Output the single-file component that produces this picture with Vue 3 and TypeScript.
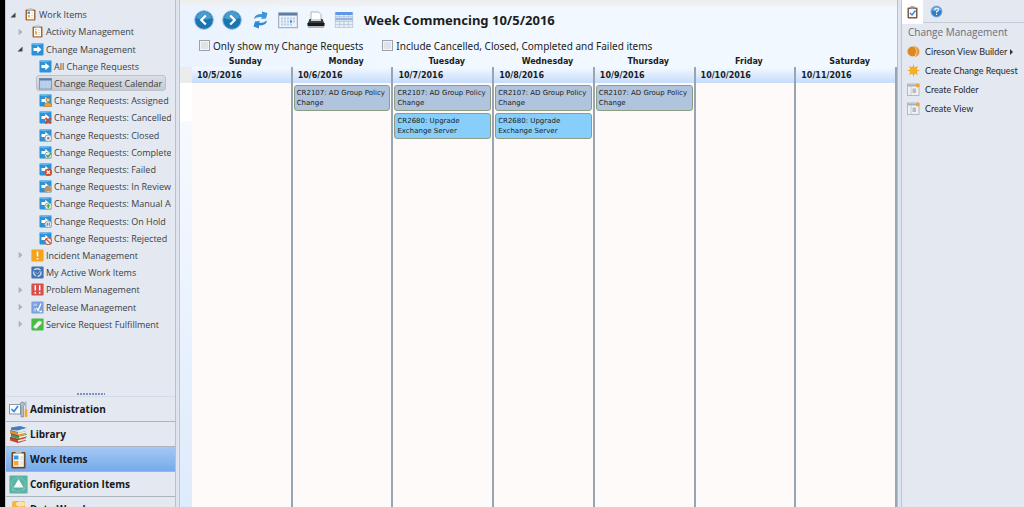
<script setup lang="ts">
import { ref } from 'vue'

interface TreeItem { label: string; level: number; icon: string; arrow?: 'open' | 'closed'; badge?: string; selected?: boolean }

const tree: TreeItem[] = [
  { label: 'Work Items', level: 0, icon: 'board-blue', arrow: 'open' },
  { label: 'Activity Management', level: 1, icon: 'board', arrow: 'closed' },
  { label: 'Change Management', level: 1, icon: 'change', arrow: 'open' },
  { label: 'All Change Requests', level: 2, icon: 'change' },
  { label: 'Change Request Calendar', level: 2, icon: 'calendar', selected: true },
  { label: 'Change Requests: Assigned', level: 2, icon: 'change', badge: 'user' },
  { label: 'Change Requests: Cancelled', level: 2, icon: 'change', badge: 'cross' },
  { label: 'Change Requests: Closed', level: 2, icon: 'change', badge: 'closed' },
  { label: 'Change Requests: Completed', level: 2, icon: 'change', badge: 'check' },
  { label: 'Change Requests: Failed', level: 2, icon: 'change', badge: 'fail' },
  { label: 'Change Requests: In Review', level: 2, icon: 'change', badge: 'review' },
  { label: 'Change Requests: Manual Activity', level: 2, icon: 'change', badge: 'manual' },
  { label: 'Change Requests: On Hold', level: 2, icon: 'change', badge: 'hold' },
  { label: 'Change Requests: Rejected', level: 2, icon: 'change', badge: 'reject' },
  { label: 'Incident Management', level: 1, icon: 'incident', arrow: 'closed' },
  { label: 'My Active Work Items', level: 1, icon: 'active' },
  { label: 'Problem Management', level: 1, icon: 'problem', arrow: 'closed' },
  { label: 'Release Management', level: 1, icon: 'release', arrow: 'closed' },
  { label: 'Service Request Fulfillment', level: 1, icon: 'service', arrow: 'closed' },
]

const sections = [
  { label: 'Administration', icon: 'admin' },
  { label: 'Library', icon: 'library' },
  { label: 'Work Items', icon: 'work' },
  { label: 'Configuration Items', icon: 'config' },
  { label: 'Data Warehouse', icon: 'data' },
]
const activeSection = ref('Work Items')

const policy = { title: 'CR2107: AD Group Policy Change', kind: 'steel' }
const exchange = { title: 'CR2680: Upgrade Exchange Server', kind: 'sky' }
const days = [
  { name: 'Sunday', date: '10/5/2016', events: [] as typeof policy[] },
  { name: 'Monday', date: '10/6/2016', events: [policy] },
  { name: 'Tuesday', date: '10/7/2016', events: [policy, exchange] },
  { name: 'Wednesday', date: '10/8/2016', events: [policy, exchange] },
  { name: 'Thursday', date: '10/9/2016', events: [policy] },
  { name: 'Friday', date: '10/10/2016', events: [] },
  { name: 'Saturday', date: '10/11/2016', events: [] },
]

const onlyMine = ref(false)
const includeClosed = ref(false)
</script>

<template>
  <div class="console">
    <aside class="sidebar">
      <ul class="tree">
        <li v-for="item in tree" :key="item.label" :class="['node', 'level-' + item.level]">
          <svg class="arrow" viewBox="0 0 8 8" aria-hidden="true">
            <path v-if="item.arrow === 'open'" d="M6.5 1.5V6.5H1.5Z" fill="#444" />
            <path v-else-if="item.arrow === 'closed'" d="M3 1.5L6 4L3 6.5Z" fill="#b9bdc5" stroke="#9a9ea8" stroke-width=".6" />
          </svg>
          <a href="#" :class="['node-link', { selected: item.selected }]">
            <svg class="node-icon" viewBox="0 0 13 13" aria-hidden="true">
              <template v-if="item.icon === 'change'">
                <rect x=".5" y=".5" width="12" height="12" rx="1" fill="#2c92d8" />
                <path d="M.5 1.5Q6 3 12.5 1V.5H.5Z" fill="#61b5ea" />
                <path d="M2.5 5H6.3V2.8L10.5 6.5L6.3 10.2V8H2.5Z" fill="#fff" />
              </template>
              <template v-else-if="item.icon === 'board' || item.icon === 'board-blue'">
                <rect x="1.5" y="1.5" width="10" height="11" rx="1" fill="#a06a36" />
                <rect x="3" y="2.8" width="7" height="8.5" fill="#fffdf5" />
                <rect x="4.2" y=".3" width="4.6" height="2.5" rx="1" fill="#bcc1c7" />
                <path v-if="item.icon === 'board-blue'" d="M3.5 3.5H6V6H3.5Z" fill="#39a0e8" />
                <path v-else d="M4 4.5H5.5M4 6.5H5.5M4 8.5H5.5" stroke="#e99b37" />
                <path d="M4 7H6V9.5H4Z" fill="#f1a638" />
                <path d="M7 5H9M7 7.5H9M7 9.5H9" stroke="#d8d8dc" />
              </template>
              <template v-else-if="item.icon === 'calendar'">
                <rect x=".5" y="1.5" width="12" height="10.5" fill="#b8cdea" stroke="#748cad" stroke-width=".8" />
                <rect x=".5" y="1.5" width="12" height="2" fill="#5c7eac" />
                <path d="M1 6H12M1 9H12M4.5 3.5V12M8.5 3.5V12" stroke="#c2d6f0" stroke-width=".4" />
              </template>
              <template v-else-if="item.icon === 'incident'">
                <rect x=".4" y=".4" width="12.2" height="12.2" rx="1" fill="#f5a21c" />
                <path d="M6.5 2.5V7.5M6.5 9V10.5" stroke="#fff" stroke-width="1.6" />
              </template>
              <template v-else-if="item.icon === 'active'">
                <rect x=".4" y=".4" width="12.2" height="12.2" rx="1" fill="#4272b0" />
                <path d="M3 4Q6.5 1.5 9.5 4M10 5.5Q10.5 9.5 6.5 10.5M5 10Q1.5 7.5 3 5.5" fill="none" stroke="#c8dbf0" stroke-width="1.3" />
                <path d="M4.5 6L6.5 8L9.5 4.5" fill="none" stroke="#8eb2dc" />
              </template>
              <template v-else-if="item.icon === 'problem'">
                <rect x=".4" y=".4" width="12.2" height="12.2" rx="1" fill="#d84e48" />
                <path d="M4.3 2.3V7.5M4.3 9V10.7M8.7 2.3V7.5M8.7 9V10.7" stroke="#fff" stroke-width="1.5" />
              </template>
              <template v-else-if="item.icon === 'release'">
                <rect x=".4" y=".4" width="12.2" height="12.2" rx="1" fill="#7c9fdd" />
                <path d="M2.5 2.5H6V5H2.5ZM2.5 7H5V10.5H2.5Z" fill="#adc5ec" />
                <path d="M5.5 7L7 9.5L10 2.5M8.5 10.5H11" fill="none" stroke="#fff" stroke-width="1.3" />
              </template>
              <template v-else>
                <rect x=".4" y=".4" width="12.2" height="12.2" rx="1" fill="#45bd45" />
                <path d="M2.5 8.5L7.5 3L10.5 3.5V5.5L5.5 10.5L3 10Z" fill="#f1f4ef" stroke="#b2cfae" stroke-width=".5" />
              </template>
              <g v-if="item.badge === 'user'"><circle cx="9" cy="6" r="2" fill="#f2c89b" stroke="#b76c21" stroke-width=".7" /><path d="M5.5 12.8V10Q9 7 12.5 10V12.8Z" fill="#eba238" stroke="#b76c21" stroke-width=".5" /></g>
              <path v-else-if="item.badge === 'cross'" d="M6.5 7L12 12.5M12 7L6.5 12.5" stroke="#e14429" stroke-width="2" />
              <g v-else-if="item.badge">
                <circle cx="9.3" cy="9.3" r="3.4" :fill="item.badge === 'fail' ? '#dd4b2d' : '#eceef0'" :stroke="item.badge === 'reject' || item.badge === 'fail' ? '#cf4a2c' : '#9ca4ac'" />
                <path v-if="item.badge === 'fail'" d="M7.7 7.7L10.9 10.9M10.9 7.7L7.7 10.9" stroke="#fff" stroke-width="1.3" />
                <path v-else-if="item.badge === 'check'" d="M7.5 9L9 11L12 7" fill="none" stroke="#36a832" stroke-width="1.4" />
                <path v-else-if="item.badge === 'manual'" d="M9.3 6.7L11.5 9.3H10.1V11.6H8.5V9.3H7.1Z" fill="#3eae36" />
                <path v-else-if="item.badge === 'hold'" d="M8.3 7.8V10.8M10.3 7.8V10.8" stroke="#4c86cd" stroke-width="1.1" />
                <path v-else-if="item.badge === 'reject'" d="M7 7L11.6 11.6" stroke="#dc5638" stroke-width="1.4" />
                <path v-else-if="item.badge === 'review'" d="M5.5 11.5V8L9 5.5L12 8V11.5Z" fill="#bc9166" />
                <rect v-else x="8.2" y="8.2" width="2.2" height="2.2" fill="#777f88" />
              </g>
            </svg>
            <span>{{ item.label }}</span>
          </a>
        </li>
      </ul>
      <div class="grip" aria-hidden="true"></div>
      <nav class="sections">
        <button v-for="s in sections" :key="s.label" type="button" :class="{ current: activeSection === s.label }" @click="activeSection = s.label">
          <svg class="section-icon" viewBox="0 0 19 19" aria-hidden="true">
            <template v-if="s.icon === 'admin'">
              <rect x=".5" y="4.5" width="11" height="9.5" fill="#f6f9fd" stroke="#8b98a8" />
              <path d="M2.5 9L5 11.5L9 6" fill="none" stroke="#2e87d6" stroke-width="1.6" />
              <path d="M11 5Q11 2 13.5 2Q16 2 15.5 5L14.5 6V17H12V6Z" fill="#b4bbc2" stroke="#747d86" stroke-width=".6" />
              <path d="M16.9 1.5V9" stroke="#9aa1a9" /><rect x="15.7" y="9" width="2.6" height="8" rx="1" fill="#f0a52d" />
            </template>
            <template v-else-if="s.icon === 'library'">
              <path d="M2 2.5L11 1L18 3L9 5.5L2 5Z" fill="#3f7fc2" /><path d="M9 5.5L18 3V5L9 7.5Z" fill="#dce5ee" />
              <path d="M1 6L9 8L17 6V9L9 11L1 9Z" fill="#e88d2b" /><path d="M2 9L10 11L18 9V12L10 14L2 12Z" fill="#4f9a4a" />
              <path d="M1 12L9 14L17 12V15.5L9 18L1 15.5Z" fill="#ca4330" /><path d="M9 8.8L17 7M10 12.5L18 10.5M9 16L17 14" stroke="#f2eee6" stroke-width="1.3" />
              <path d="M1 5.5L9 7.5M2 9L10 11M1 12.5L9 14.5" stroke="#5b4032" stroke-width=".7" />
            </template>
            <template v-else-if="s.icon === 'work'">
              <rect x="2.5" y="2" width="14" height="16.5" rx="1" fill="#70482a" /><rect x="4.2" y="3.5" width="10.6" height="13.3" fill="#fffdf7" />
              <rect x="6.5" y=".5" width="6" height="3" rx="1" fill="#b9bfc6" /><rect x="5" y="5.5" width="4.5" height="4" fill="#309ce2" /><rect x="5" y="11" width="4.5" height="4.5" fill="#f4a62d" />
              <path d="M11 7H14M11 9H14M11 12H14M11 14H14" stroke="#c2cbd5" stroke-width=".8" />
            </template>
            <template v-else-if="s.icon === 'config'">
              <rect x=".4" y=".4" width="18.2" height="18.2" rx="1" fill="#5bb3a4" /><circle cx="9.5" cy="9.5" r="7" fill="none" stroke="#7cc3b6" /><path d="M9.5 4L14.5 12.5H4.500Z" fill="#f5fbfa" /><path d="M3 14L5 16M14 15L16 13" stroke="#9bd5ca" />
            </template>
            <template v-else>
              <rect x="3" y="1" width="13" height="17" rx="2" fill="#f2b748" /><ellipse cx="11.5" cy="4" rx="4.5" ry="2.5" fill="#fae4af" /><rect x="4.5" y="8" width="5" height="8" fill="#fff3d5" />
            </template>
          </svg>
          {{ s.label }}
        </button>
      </nav>
    </aside>
    <div class="splitter"></div>

    <main class="calendar">
      <header class="tools">
        <div class="toolbar">
          <button type="button" aria-label="Previous week"><svg viewBox="0 0 20 20"><circle cx="10" cy="10" r="9.3" fill="#1b75b2" stroke="#8bb9d8" /><path d="M2 8A8.2 8.2 0 0 1 18 8Q10 11 2 8Z" fill="#4a9bd0" /><path d="M11.8 5.5L7.3 10L11.8 14.5" fill="none" stroke="#fff" stroke-width="2.2" /></svg></button>
          <button type="button" aria-label="Next week"><svg viewBox="0 0 20 20"><circle cx="10" cy="10" r="9.3" fill="#1b75b2" stroke="#8bb9d8" /><path d="M2 8A8.2 8.2 0 0 1 18 8Q10 11 2 8Z" fill="#4a9bd0" /><path d="M8.2 5.5L12.7 10L8.2 14.5" fill="none" stroke="#fff" stroke-width="2.2" /></svg></button>
          <button type="button" aria-label="Refresh"><svg viewBox="0 0 20 20"><path d="M4 9Q4.500 4 12 4V1.500L17.500 3L16 8.500L11 9L12 7Q7 6.500 4 9Z" fill="#3c96d8" /><path d="M17 10.500Q16.500 15.500 9 15.500V18.500L3.500 16.500L5 11.500L10 11L9 13Q14 13 17 10.500Z" fill="#3389cf" /></svg></button>
          <button type="button" aria-label="Month view"><svg viewBox="0 0 20 20"><rect x=".7" y="2.7" width="18.6" height="15" fill="#edf3fa" stroke="#94a2b5" /><path d="M1 4.3H19" stroke="#5d7ca3" stroke-width="2.5" /><path d="M3 8.5H17M3 11.5H17M3 14.5H14" stroke="#b3cde8" stroke-width="2" stroke-dasharray="2 1" /><rect x="12" y="10.5" width="2" height="2" fill="#3b83cc" /></svg></button>
          <button type="button" aria-label="Print"><svg viewBox="0 0 20 20"><path d="M5 10V2H12.5L15 4.5V10Z" fill="#fff" stroke="#8f969d" stroke-width=".7" /><path d="M3.5 9H5V11H15V9H16.5L18.5 14H1.5Z" fill="#3b3e43" /><rect x="1.5" y="13" width="17" height="3" fill="#18191c" /><path d="M2 17H18" stroke="#b0b3b7" stroke-width="2" /></svg></button>
          <button type="button" aria-label="Week view"><svg viewBox="0 0 20 20"><rect x="1" y="2" width="18" height="15.5" fill="#e6edf5" /><path d="M1 3.5H19" stroke="#5f99e6" stroke-width="3" /><path d="M1 9H19" stroke="#91b6e4" stroke-width="2.5" /><path d="M1 6.5H19M1 11.5H19M1 14.5H19M5.5 5V17.5M10 5V17.5M14.5 5V17.5M1.300 2V17.5M18.700 2V17.500M1 17.5H19" stroke="#b5c3d3" stroke-width=".7" /></svg></button>
          <h1>Week Commencing 10/5/2016</h1>
        </div>
        <div class="filters">
          <label><input v-model="onlyMine" type="checkbox" />Only show my Change Requests</label>
          <label><input v-model="includeClosed" type="checkbox" />Include Cancelled, Closed, Completed and Failed items</label>
        </div>
      </header>
      <div class="week">
        <div class="gutter"></div>
        <section v-for="day in days" :key="day.name" class="day">
          <h2>{{ day.name }}</h2>
          <div class="day-body">
            <time>{{ day.date }}</time>
            <article v-for="e in day.events" :key="e.title" :class="['event', e.kind]">{{ e.title }}</article>
          </div>
        </section>
      </div>
    </main>

    <div class="splitter"></div>
    <aside class="tasks">
      <div class="tabs">
        <button type="button" class="tab active" aria-label="Tasks"><svg viewBox="0 0 13 13"><rect x="1.5" y="1.5" width="10" height="11" rx="1" fill="#7e5b45" /><rect x="3" y="3" width="7" height="8" fill="#f5f9fd" /><rect x="4.2" y=".3" width="4.6" height="2.7" rx="1" fill="#8d949c" /><path d="M4 7L6 9L9.5 4.5" fill="none" stroke="#3684cc" stroke-width="1.3" /></svg></button>
        <button type="button" class="tab" aria-label="Help"><svg viewBox="0 0 13 13"><circle cx="6.5" cy="6.5" r="5.5" fill="#2f7fc9" stroke="#83add7" stroke-width=".8" /><path d="M1.5 5A5.5 5.5 0 0 1 11.5 5Q6 7 1.5 5Z" fill="#68aae3" /><path d="M4.7 5.2Q4.8 3.3 6.6 3.3Q8.5 3.3 8.4 5Q8.3 6 6.6 6.8V7.8M6.6 8.8V10" fill="none" stroke="#fff" stroke-width="1.1" /></svg></button>
      </div>
      <h2>Change Management</h2>
      <ul>
        <li><a href="#"><svg viewBox="0 0 13 13"><circle cx="5.5" cy="6.5" r="5" fill="#dc8920" /><path d="M7 .5Q12.5 2.5 12.5 6.5Q12.5 11 7.5 12.5Q10.5 9.5 10 6Q9.5 3 7 .5Z" fill="#e39b3c" /><path d="M8 2Q11 5.5 8.5 10.5" fill="none" stroke="#f6d5a7" stroke-width=".8" /></svg><span>Cireson View Builder</span><i class="more"></i></a></li>
        <li><a href="#"><svg viewBox="0 0 13 13"><path d="M6.5 0L7.6 3.5L11 2L9.5 5.4L13 6.5L9.5 7.6L11 11L7.6 9.5L6.5 13L5.4 9.5L2 11L3.5 7.6L0 6.5L3.5 5.4L2 2L5.4 3.5Z" fill="#f3a623" /><circle cx="6.5" cy="6.5" r="3.6" fill="#f8ae25" /></svg><span>Create Change Request</span></a></li>
        <li v-for="t in ['Create Folder', 'Create View']" :key="t"><a href="#"><svg viewBox="0 0 13 13"><rect x=".5" y="1" width="11.5" height="11.5" fill="#eff0f1" stroke="#a7abb2" stroke-width=".8" /><path d="M1 2.5H12" stroke="#a5b0bf" stroke-width="1.8" /><path d="M4 3.5V12" stroke="#c2c5c9" stroke-width=".8" /><rect x="5.5" y="5.5" width="3.5" height="4.5" fill="#b7bcc3" /><circle cx="10.7" cy="2.5" r="1.9" fill="#f2a23a" /></svg><span>{{ t }}</span></a></li>
      </ul>
    </aside>
  </div>
</template>

<style>
html, body { margin: 0; height: 100%; }
#app { height: 100%; }
</style>

<style scoped>
.console { display: flex; height: 100vh; overflow: hidden; box-sizing: border-box; border-left: 5px solid #000; background: #e3e8f1; font-family: "Open Sans", "Noto Sans", sans-serif; font-size: 9px; color: #3c3f46; }
ul { list-style: none; margin: 0; padding: 0; }
a { color: inherit; text-decoration: none; }
button { font: inherit; color: inherit; border: 0; background: none; padding: 0; margin: 0; }
svg { display: block; flex: none; }

.sidebar { flex: 0 0 170px; min-width: 0; display: flex; flex-direction: column; overflow: hidden; box-sizing: border-box; border-left: 1px solid #c3c9d4; }
.tree { flex: none; display: flex; flex-direction: column; height: 327px; padding-top: 6px; margin-right: 4px; overflow: hidden; }
.node { flex: 1; display: flex; align-items: center; min-height: 0; white-space: nowrap; }
.level-0 { padding-left: 3px; }
.level-1 { padding-left: 10px; }
.level-2 { padding-left: 18px; }
.arrow { width: 8px; height: 8px; margin-right: 4px; }
.node-link { display: flex; align-items: center; gap: 2px; height: 16px; padding: 0 3px 0 2px; border: 1px solid transparent; box-sizing: border-box; border-radius: 3px; }
.node-link.selected { background: linear-gradient(#dcdfe5, #c6c9cf); border-color: #bcc0c8; }
.node-icon { width: 13px; height: 13px; }
.grip { flex: none; width: 28px; height: 2px; margin: auto auto 1px; background: repeating-linear-gradient(90deg, #7b93bd 0 2px, transparent 2px 3px); }
.sections { flex: none; height: 111px; overflow: hidden; }
.sections button { display: flex; align-items: center; gap: 2px; width: 100%; height: 25px; padding-left: 3px; box-sizing: border-box; border-top: 1px solid #aeb4be; font-weight: 700; font-size: 10px; color: #16181c; white-space: nowrap; }
.sections button:first-child { border-top-color: #d5dae4; }
.sections button.current { background: linear-gradient(#a5c8f3, #76aaea); }
.section-icon { width: 19px; height: 19px; }

.splitter { flex: 0 0 5px; box-sizing: border-box; border-left: 1px solid #b9bfcb; border-right: 1px solid #bcc5d4; background: #dfe4ee; }

.calendar { flex: 1; min-width: 0; display: flex; flex-direction: column; background: linear-gradient(90deg, #eaf3fe, #f2f8ff 30%); font-family: "DejaVu Sans", sans-serif; color: #1b1d22; }
.tools { flex: none; padding: 8px 0 0 14px; border-top: 1px solid #eee; background: linear-gradient(#eee, #eef1f5 4px, transparent 6px); }
.toolbar { display: flex; align-items: center; gap: 8px; height: 21px; }
.toolbar button, .toolbar svg { width: 20px; height: 20px; }
.toolbar h1 { margin: 0 0 0 2px; font-family: "Noto Sans", sans-serif; font-size: 13px; line-height: 20px; white-space: nowrap; }
.filters { display: flex; gap: 19px; padding: 7px 0 0 5px; height: 18px; font-family: "Noto Sans", sans-serif; font-size: 10px; line-height: 16px; white-space: nowrap; }
.filters label { display: flex; align-items: center; gap: 3px; height: 17px; }
.filters input { appearance: none; width: 11px; height: 11px; margin: 0; border: 1px solid #9ea3ab; background: #dfe2e6; box-shadow: inset 0 0 0 1px #f2f4f6; }
.week { flex: 1; display: grid; grid-template-columns: 12px repeat(7, minmax(0, 1fr)); min-height: 0; }
.gutter { margin-top: 12px; background: linear-gradient(#ececec 0 16px, #fff 16px 54px, #f6faff 54px, #deebfc); }
.day { display: flex; flex-direction: column; min-width: 0; }
.day h2 { flex: none; margin: 0; height: 12px; line-height: 14px; font-size: 8px; text-align: center; padding-left: 6px; }
.day-body { flex: 1; display: flex; flex-direction: column; gap: 2px; border-right: 2px solid #98a6b3; background: #fffafa; }
.day time { display: block; height: 16px; line-height: 18px; padding-left: 5px; font-size: 8px; font-weight: 700; background: linear-gradient(#f4f9ff, #c5dcfc); }
.event { margin: 0 1px; padding: 2px; height: 20px; border: 1px solid #8f9c84; border-radius: 3px; font-size: 7px; line-height: 10px; }
.steel { background: #b0c4de; }
.sky { background: #87cefa; }

.tasks { flex: 0 0 122px; min-width: 0; overflow: hidden; white-space: nowrap; }
.tabs { display: flex; height: 23px; border-bottom: 1px solid #c5cbd6; box-sizing: border-box; }
.tab { display: flex; align-items: center; justify-content: center; width: 26px; }
.tab.active { width: 21px; height: 24px; background: #fff; }
.tab svg { width: 13px; height: 13px; }
.tasks h2 { margin: 2px 0 3px 6px; font-size: 10px; line-height: 14px; font-weight: 400; color: #6a6e76; }
.tasks li a { display: flex; align-items: center; gap: 5px; height: 19px; padding-left: 5px; font-family: Lato, sans-serif; font-size: 9px; color: #25272c; }
.tasks li svg { width: 13px; height: 13px; }
.more { margin-left: -2px; border-left: 3px solid #333; border-top: 3px solid transparent; border-bottom: 3px solid transparent; }
</style>
